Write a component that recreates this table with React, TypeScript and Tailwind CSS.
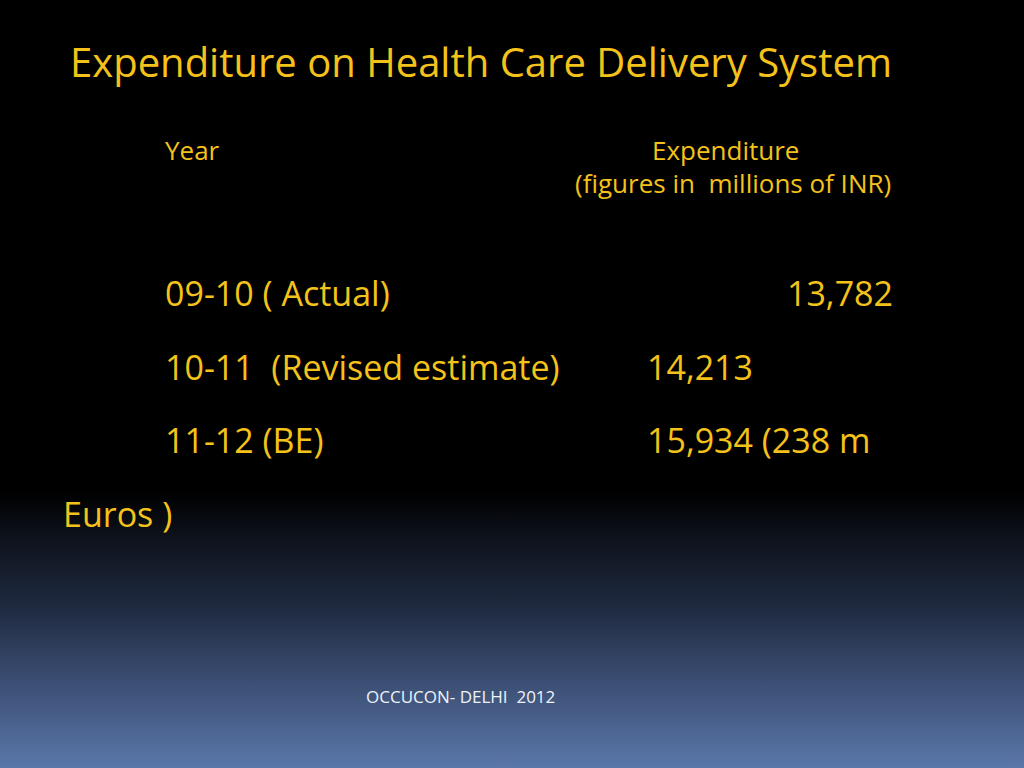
export default function App() {
  const rows = [
    { year: "09-10 ( Actual)", value: "13,782", right: true },
    { year: "10-11  (Revised estimate)", value: "14,213", right: false },
    { year: "11-12 (BE)", value: "15,934 (238 m", right: false },
  ]

  return (
    <div className="relative h-[768px] w-[1024px] overflow-hidden bg-[linear-gradient(to_bottom,#000000_0%,#000000_64%,#0d121b_70%,#1f2a40_79%,#3c4f74_89%,#5a77aa_100%)] font-['Open_Sans',sans-serif] text-[#f4c21a]">
      {/* Title */}
      <h1 className="pl-[70px] pt-[38px] text-[40px] leading-[48px] whitespace-pre">
        Expenditure on Health Care Delivery System
      </h1>

      {/* Column headings */}
      <div className="mt-[48px] flex text-[26px] leading-[33px] whitespace-pre">
        <div className="w-[575px] pl-[165px]">Year</div>
        <div className="flex flex-col">
          <span className="pl-[77px]">Expenditure</span>
          <span>(figures in  millions of INR)</span>
        </div>
      </div>

      {/* Data rows */}
      <div className="mt-[69px] flex flex-col gap-[25.5px] text-[34px] leading-[48px]">
        {rows.map((r) => (
          <div key={r.year} className="flex whitespace-pre">
            <div className="w-[647px] pl-[165px]">{r.year}</div>
            {r.right ? (
              <div className="w-[246px] text-right">{r.value}</div>
            ) : (
              <div>{r.value}</div>
            )}
          </div>
        ))}
        <div className="pl-[63px]">Euros )</div>
      </div>

      {/* Footer */}
      <div className="mt-[149px] pl-[366px] text-[17px] leading-[20px] whitespace-pre text-[#eef2fa]">
        OCCUCON- DELHI  2012
      </div>
    </div>
  )
}
